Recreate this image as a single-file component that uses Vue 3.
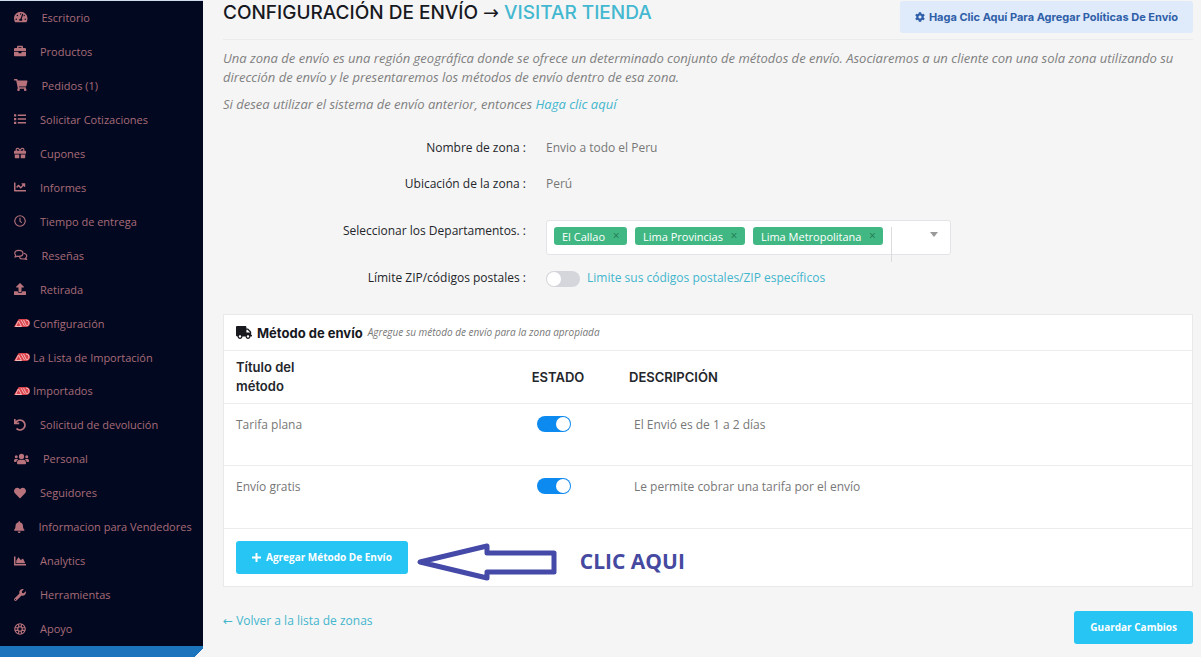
<script setup>
import { ref } from 'vue'

const icons = {
  dash: { w: 576, d: 'M288 32C128.94 32 0 160.94 0 320c0 52.8 14.25 102.26 39.06 144.8 5.61 9.62 16.3 15.2 27.44 15.2h443c11.14 0 21.83-5.58 27.44-15.2C561.75 422.26 576 372.8 576 320c0-159.06-128.94-288-288-288zm0 64c14.71 0 26.58 10.13 30.32 23.65-1.11 2.26-2.64 4.23-3.45 6.67l-9.22 27.67c-5.13 3.49-10.97 6.01-17.64 6.01-17.67 0-32-14.33-32-32S270.33 96 288 96zM96 384c-17.67 0-32-14.33-32-32s14.33-32 32-32 32 14.33 32 32-14.33 32-32 32zm48-160c-17.67 0-32-14.33-32-32s14.33-32 32-32 32 14.33 32 32-14.33 32-32 32zm246.77-72.41l-61.33 184C343.13 347.33 352 364.54 352 384c0 11.72-3.38 22.55-8.88 32H232.88c-5.5-9.45-8.88-20.28-8.88-32 0-33.94 26.5-61.43 59.9-63.59l61.34-184.01c4.17-12.56 17.73-19.45 30.36-15.17 12.57 4.19 19.35 17.79 15.17 30.36zm14.66 57.2l15.52-46.55c3.47-1.29 7.13-2.23 11.05-2.23 17.67 0 32 14.33 32 32s-14.33 32-32 32c-11.38-.01-20.89-6.28-26.57-15.22zM480 384c-17.67 0-32-14.33-32-32s14.33-32 32-32 32 14.33 32 32-14.33 32-32 32z' },
  case: { w: 512, d: 'M320 336c0 8.84-7.16 16-16 16h-96c-8.84 0-16-7.16-16-16v-48H0v144c0 25.6 22.4 48 48 48h416c25.6 0 48-22.4 48-48V288H320v48zm144-208h-80V80c0-25.6-22.4-48-48-48H176c-25.6 0-48 22.4-48 48v48H48c-25.6 0-48 22.4-48 48v80h512v-80c0-25.6-22.4-48-48-48zm-144 0H192V96h128v32z' },
  cart: { w: 576, d: 'M528.12 301.319l47.273-208C578.806 78.301 567.391 64 551.99 64H159.208l-9.166-44.81C147.758 8.021 137.93 0 126.529 0H24C10.745 0 0 10.745 0 24v16c0 13.255 10.745 24 24 24h69.883l70.248 343.435C147.325 417.1 136 435.222 136 456c0 30.928 25.072 56 56 56s56-25.072 56-56c0-15.674-6.447-29.835-16.824-40h209.647C430.447 426.165 424 440.326 424 456c0 30.928 25.072 56 56 56s56-25.072 56-56c0-22.172-12.888-41.332-31.579-50.405l5.517-24.276c3.413-15.018-8.002-29.319-23.403-29.319H218.117l-6.545-32h293.145c11.206 0 20.92-7.754 23.403-18.681z' },
  list: { w: 512, d: 'M0 48h96v96H0zM0 208h96v96H0zM0 368h96v96H0zM160 64h352v64H160zM160 224h352v64H160zM160 384h352v64H160z' },
  gift: { w: 512, d: 'M32 448c0 17.7 14.3 32 32 32h160V320H32v128zm256 32h160c17.7 0 32-14.3 32-32V320H288v160zm192-320h-42.1c6.2-12.1 10.1-25.5 10.1-40 0-48.5-39.5-88-88-88-41.6 0-68.5 21.3-103 68.3-34.5-47-61.4-68.3-103-68.3-48.5 0-88 39.5-88 88 0 14.5 3.8 27.9 10.1 40H32c-17.7 0-32 14.3-32 32v80c0 8.8 7.2 16 16 16h480c8.8 0 16-7.2 16-16v-80c0-17.7-14.3-32-32-32zm-326.1 0c-22.1 0-40-17.9-40-40s17.9-40 40-40c19.9 0 34.6 3.3 86.1 80h-86.1zm206.1 0h-86.1c51.4-76.5 65.7-80 86.1-80 22.1 0 40 17.9 40 40s-17.9 40-40 40z' },
  line: { w: 512, d: 'M496 384H64V80c0-8.84-7.16-16-16-16H16C7.16 64 0 71.16 0 80v336c0 17.67 14.33 32 32 32h464c8.84 0 16-7.16 16-16v-32c0-8.84-7.16-16-16-16zM464 96H345.94c-21.38 0-32.09 25.85-16.97 40.97l32.4 32.4L288 242.75l-73.37-73.37c-12.5-12.5-32.76-12.5-45.25 0l-68.69 68.69c-6.25 6.25-6.25 16.38 0 22.63l22.62 22.62c6.25 6.25 16.38 6.25 22.63 0L192 237.25l73.37 73.37c12.5 12.5 32.76 12.5 45.25 0l96-96 32.4 32.4c15.12 15.12 40.97 4.41 40.97-16.97V112c.01-8.84-7.15-16-15.99-16z' },
  clock: { w: 512, stroke: true, d: 'M256 32a224 224 0 1 0 0 448a224 224 0 1 0 0-448zM256 120v150l76 56' },
  chat: { w: 576, stroke: true, d: 'M208 56C110 56 32 112 32 186c0 38 18 66 44 88l-34 60c48 0 80-16 100-28 22 6 44 8 66 8 98 0 176-56 176-128S306 56 208 56zM420 182c72 14 124 60 124 118 0 34-18 66-44 86l34 62c-46 0-80-14-102-30-90 20-168-8-206-62' },
  upload: { w: 512, d: 'M296 384h-80c-13.3 0-24-10.7-24-24V192h-87.7c-17.8 0-26.7-21.5-14.1-34.1L242.3 5.7c7.5-7.5 19.8-7.5 27.3 0l152.2 152.2c12.6 12.6 3.7 34.1-14.1 34.1H320v168c0 13.3-10.7 24-24 24zm216-8v112c0 13.3-10.7 24-24 24H24c-13.3 0-24-10.7-24-24V376c0-13.3 10.7-24 24-24h136v8c0 30.9 25.1 56 56 56h80c30.9 0 56-25.1 56-56v-8h136c13.3 0 24 10.7 24 24z' },
  undo: { w: 512, d: 'M212.333 224.333H12c-6.627 0-12-5.373-12-12V12C0 5.373 5.373 0 12 0h48c6.627 0 12 5.373 12 12v78.112C117.773 39.279 184.26 7.47 258.175 8.007c136.906.994 246.448 111.623 246.157 248.532C504.041 393.258 393.12 504 256.333 504c-64.089 0-122.496-24.313-166.51-64.215-5.099-4.622-5.334-12.554-.467-17.42l33.967-33.967c4.474-4.474 11.662-4.717 16.401-.525C170.76 415.336 211.58 432 256.333 432c97.268 0 176-78.716 176-176 0-97.267-78.716-176-176-176-58.496 0-110.28 28.476-142.274 72.333h98.274c6.627 0 12 5.373 12 12v48c0 6.627-5.373 12-12 12z' },
  users: { w: 640, d: 'M96 96a64 64 0 1 0 0 128a64 64 0 1 0 0-128zM544 96a64 64 0 1 0 0 128a64 64 0 1 0 0-128zM320 32a112 112 0 1 0 0 224a112 112 0 1 0 0-224zM64 256h64c18 0 34 7 45 19-40 22-68 60-74 109H32c-18 0-32-14-32-32v-32c0-35 29-64 64-64zM576 256h-64c-18 0-34 7-45 19 40 22 68 60 74 109h67c18 0 32-14 32-32v-32c0-35-29-64-64-64zM243 288h154c64 0 115 52 115 115v29c0 26-22 48-48 48H176c-26 0-48-22-48-48v-29c0-63 51-115 115-115z' },
  heart: { w: 512, d: 'M462.3 62.6C407.5 15.9 326 24.3 275.7 76.2L256 96.5l-19.7-20.3C186.1 24.3 104.5 15.9 49.7 62.6c-62.8 53.6-66.1 149.8-9.9 207.9l193.5 199.8c12.5 12.9 32.8 12.9 45.3 0l193.5-199.8c56.3-58.1 53-154.3-9.8-207.9z' },
  bell: { w: 448, d: 'M224 512c35.32 0 63.97-28.65 63.97-64H160.03c0 35.35 28.65 64 63.97 64zm215.39-149.71c-19.32-20.76-55.47-51.99-55.47-154.29 0-77.7-54.48-139.9-127.94-155.16V32c0-17.67-14.32-32-31.98-32s-31.98 14.33-31.98 32v20.84C118.56 68.1 64.08 130.3 64.08 208c0 102.3-36.15 133.53-55.47 154.29-6 6.45-8.66 14.16-8.61 21.71.11 16.4 12.98 32 32.1 32h383.8c19.12 0 32-15.6 32.1-32 .05-7.55-2.61-15.27-8.61-21.71z' },
  area: { w: 512, d: 'M500 384c6.6 0 12 5.4 12 12v40c0 6.6-5.4 12-12 12H12c-6.6 0-12-5.4-12-12V76c0-6.6 5.4-12 12-12h40c6.6 0 12 5.4 12 12v308h436zM372.7 159.5L288 216l-85.3-113.7c-5.1-6.8-15.5-6.3-19.9 1L96 248v104h384l-89.9-187.8c-3.2-6.5-11.4-8.7-17.4-4.7z' },
  wrench: { w: 512, d: 'M507.73 109.1c-2.24-9.03-13.54-12.09-20.12-5.51l-74.36 74.36-67.88-11.31-11.31-67.88 74.36-74.36c6.62-6.62 3.43-17.9-5.66-20.16-47.38-11.74-99.55.91-136.58 37.93-39.64 39.64-50.55 97.1-34.05 147.2L18.74 402.76c-24.99 24.99-24.99 65.51 0 90.5 24.99 24.99 65.51 24.99 90.5 0l213.21-213.21c50.12 16.71 107.47 5.68 147.37-34.22 37.07-37.07 49.7-89.32 37.91-136.73zM64 472c-13.25 0-24-10.75-24-24 0-13.26 10.75-24 24-24s24 10.74 24 24c0 13.25-10.75 24-24 24z' },
  ring: { w: 512, stroke: true, d: 'M256 32a224 224 0 1 0 0 448a224 224 0 1 0 0-448zM256 160a96 96 0 1 0 0 192a96 96 0 1 0 0-192zM200 48v130M312 48v130M200 334v130M312 334v130M48 200h130M48 312h130M334 200h130M334 312h130' },
}

const menu = [
  ['dash', 'Escritorio'],
  ['case', 'Productos'],
  ['cart', 'Pedidos (1)'],
  ['list', 'Solicitar Cotizaciones'],
  ['gift', 'Cupones'],
  ['line', 'Informes'],
  ['clock', 'Tiempo de entrega'],
  ['chat', 'Reseñas'],
  ['upload', 'Retirada'],
  ['ali', 'Configuración'],
  ['ali', 'La Lista de Importación'],
  ['ali', 'Importados'],
  ['undo', 'Solicitud de devolución'],
  ['users', 'Personal'],
  ['heart', 'Seguidores'],
  ['bell', 'Informacion para Vendedores'],
  ['area', 'Analytics'],
  ['wrench', 'Herramientas'],
  ['ring', 'Apoyo'],
]

const departments = ref(['El Callao', 'Lima Provincias', 'Lima Metropolitana'])
const limitZip = ref(false)
const methods = ref([
  { title: 'Tarifa plana', on: true, text: 'El Envió es de 1 a 2 días' },
  { title: 'Envío gratis', on: true, text: 'Le permite cobrar una tarifa por el envío' },
])

function removeDepartment(name) {
  departments.value = departments.value.filter((d) => d !== name)
}
</script>

<template>
  <div class="page">
    <aside class="sidebar">
      <nav class="menu">
        <a v-for="[icon, label] in menu" :key="label" href="#" class="item" :class="{ tight: icon === 'ali' }">
          <svg v-if="icon === 'ali'" width="16" height="8" viewBox="0 0 32 16" aria-hidden="true">
            <path d="M0 16L8 2q1-2 3-2h14q7 1 7 8t-7 8z" fill="#d8434c" />
            <path d="M3 15l6-11 6 11zM14 2l7 12M19 2l6 12M24 2q6 0 6 6 0 4-4 6" fill="none" stroke="#f6b9bb" stroke-width="2" />
          </svg>
          <svg v-else height="12" :viewBox="`0 0 ${icons[icon].w} 512`" :class="{ outline: icons[icon].stroke }" aria-hidden="true">
            <path :d="icons[icon].d" />
          </svg>
          <span>{{ label }}</span>
        </a>
      </nav>
      <div class="side-foot"></div>
    </aside>

    <main class="main">
      <header class="head">
        <h1>CONFIGURACIÓN DE ENVÍO <span class="arrow">→</span> <a href="#">VISITAR TIENDA</a></h1>
        <button type="button" class="policy">
          <svg width="10" height="10" viewBox="0 0 512 512" aria-hidden="true">
            <path d="M487.4 315.7l-42.6-24.6c4.3-23.2 4.3-47 0-70.2l42.6-24.6c4.9-2.8 7.1-8.6 5.5-14-11.1-35.6-30-67.8-54.7-94.6-3.8-4.1-10-5.1-14.8-2.3L380.8 110c-17.9-15.4-38.5-27.3-60.8-35.1V25.8c0-5.6-3.9-10.5-9.4-11.7-36.7-8.2-74.3-7.8-109.2 0-5.5 1.2-9.4 6.1-9.4 11.7V75c-22.2 7.9-42.8 19.8-60.8 35.1L88.7 85.5c-4.9-2.8-11-1.9-14.8 2.3-24.7 26.7-43.6 58.9-54.7 94.6-1.7 5.4.6 11.2 5.5 14L67.3 221c-4.3 23.2-4.3 47 0 70.2l-42.6 24.6c-4.9 2.8-7.1 8.6-5.5 14 11.1 35.6 30 67.8 54.7 94.6 3.8 4.1 10 5.1 14.8 2.3l42.6-24.6c17.9 15.4 38.5 27.3 60.8 35.1v49.2c0 5.6 3.9 10.5 9.4 11.7 36.7 8.2 74.3 7.8 109.2 0 5.5-1.2 9.4-6.1 9.4-11.7v-49.2c22.2-7.9 42.8-19.8 60.8-35.1l42.6 24.6c4.9 2.8 11 1.9 14.8-2.3 24.7-26.7 43.6-58.9 54.7-94.6 1.5-5.5-.7-11.3-5.6-14.1zM256 336c-44.1 0-80-35.9-80-80s35.9-80 80-80 80 35.9 80 80-35.9 80-80 80z" />
          </svg>
          Haga Clic Aquí Para Agregar Políticas De Envío
        </button>
      </header>

      <div class="intro">
        <p>Una zona de envío es una región geográfica donde se ofrece un determinado conjunto de métodos de envío. Asociaremos a un cliente con una sola zona utilizando su dirección de envío y le presentaremos los métodos de envío dentro de esa zona.</p>
        <p>Si desea utilizar el sistema de envío anterior, entonces <a href="#">Haga clic aquí</a></p>
      </div>

      <form class="form" @submit.prevent>
        <span class="label">Nombre de zona :</span>
        <span class="value">Envio a todo el Peru</span>
        <span class="label">Ubicación de la zona :</span>
        <span class="value">Perú</span>
        <label class="label dep-label" for="departments">Seleccionar los Departamentos. :</label>
        <div class="select">
          <span v-for="d in departments" :key="d" class="chip">{{ d }}<button type="button" :aria-label="`Quitar ${d}`" @click="removeDepartment(d)">×</button></span>
          <input id="departments" type="text" class="search" />
          <span class="caret"></span>
        </div>
        <label class="label" for="limit">Límite ZIP/códigos postales :</label>
        <div class="limit">
          <input id="limit" v-model="limitZip" type="checkbox" class="toggle" />
          <a href="#">Limite sus códigos postales/ZIP específicos</a>
        </div>
      </form>

      <section class="card">
        <div class="card-head">
          <svg width="16" height="13" viewBox="0 0 640 512" aria-hidden="true">
            <path d="M624 352h-16V243.9c0-12.7-5.1-24.9-14.1-33.9L494 110.1c-9-9-21.2-14.1-33.9-14.1H416V48c0-26.5-21.5-48-48-48H48C21.5 0 0 21.5 0 48v320c0 26.5 21.5 48 48 48h16c0 53 43 96 96 96s96-43 96-96h128c0 53 43 96 96 96s96-43 96-96h48c8.8 0 16-7.2 16-16v-32c0-8.8-7.2-16-16-16zM160 464c-26.5 0-48-21.5-48-48s21.5-48 48-48 48 21.5 48 48-21.5 48-48 48zm320 0c-26.5 0-48-21.5-48-48s21.5-48 48-48 48 21.5 48 48-21.5 48-48 48zm80-208H416V144h44.1l99.9 99.9V256z" />
          </svg>
          <h2>Método de envío</h2>
          <em>Agregue su método de envío para la zona apropiada</em>
        </div>
        <table>
          <thead>
            <tr>
              <th class="col-title">Título del<br />método</th>
              <th class="col-state">ESTADO</th>
              <th>DESCRIPCIÓN</th>
            </tr>
          </thead>
          <tbody>
            <tr v-for="m in methods" :key="m.title">
              <td>{{ m.title }}</td>
              <td class="col-state"><input v-model="m.on" type="checkbox" class="toggle" :aria-label="m.title" /></td>
              <td class="desc">{{ m.text }}</td>
            </tr>
          </tbody>
        </table>
        <div class="card-foot">
          <button type="button" class="btn">
            <svg width="9" height="9" viewBox="0 0 18 18" aria-hidden="true"><path d="M9 0v18M0 9h18" stroke="#fff" stroke-width="4" /></svg>
            Agregar Método De Envío
          </button>
          <svg class="pointer" width="140" height="38" viewBox="0 0 140 38" aria-hidden="true">
            <path d="M3 19L70 3V10H137V29H70V35Z" fill="none" stroke="#4549a8" stroke-width="5" stroke-linejoin="round" />
          </svg>
          <strong>CLIC AQUI</strong>
        </div>
      </section>

      <footer class="foot">
        <a href="#"><span class="arrow">←</span> Volver a la lista de zonas</a>
        <button type="button" class="btn">Guardar Cambios</button>
      </footer>
    </main>
  </div>
</template>

<style>
body {
  background: #f5f5f5;
}
</style>

<style scoped>
.page {
  display: flex;
  min-height: 100vh;
  background: #f5f5f5;
  color: #777;
  font: 12px/19px "Open Sans", "Noto Sans", sans-serif;
}
.page * {
  box-sizing: border-box;
}
a {
  color: #43b6cd;
  text-decoration: none;
}
button {
  border: 0;
  cursor: pointer;
}
.arrow {
  font-family: "DejaVu Sans", sans-serif;
  font-weight: 400;
  line-height: 1;
}
.sidebar {
  flex: 0 0 203px;
  min-width: 0;
  display: flex;
  flex-direction: column;
  background: #020820;
  border-top: 1px solid #cfdcec;
}
.menu {
  flex: 1;
  display: flex;
  flex-direction: column;
}
.item {
  flex: 1 0 33px;
  display: flex;
  align-items: center;
  gap: 14px;
  padding: 0 0 1px 14px;
  color: #a86c78;
  font-size: 11px;
  white-space: nowrap;
}
.item svg {
  flex: none;
  fill: #b8727c;
}
.item svg.outline {
  fill: none;
  stroke: #b8727c;
  stroke-width: 48;
}
.item.tight {
  gap: 3px;
}
.side-foot {
  height: 11px;
  background: linear-gradient(135deg, #1c75bc calc(100% - 6px), #f5f5f5 0);
}
.main {
  flex: 1;
  min-width: 0;
  padding: 0 8px 0 20px;
}
.head {
  display: flex;
  align-items: flex-start;
  justify-content: space-between;
  height: 40px;
  border-bottom: 1px solid #e9ebec;
}
h1 {
  margin: 0;
  color: #17191f;
  font: 500 19px/26px Inter, sans-serif;
}
h1 a {
  color: #43b8d0;
}
.policy {
  display: flex;
  align-items: center;
  gap: 4px;
  height: 32px;
  margin-top: 1px;
  padding: 0 15px;
  border-radius: 3px;
  background: #dfeafa;
  color: #2f5fa8;
  fill: #2f5fa8;
  font: 700 11px/16px Inter, sans-serif;
}
.intro {
  padding-top: 9px;
  color: #808080;
  font-size: 13px;
  font-style: italic;
}
.intro p {
  margin: 0 0 8px;
}
.form {
  display: grid;
  grid-template-columns: 303px 1fr;
  column-gap: 20px;
  padding-top: 16px;
}
.label {
  height: 36px;
  color: #23262b;
  text-align: right;
}
.value {
  height: 36px;
}
.dep-label {
  height: 58px;
  padding-top: 11px;
}
.select {
  display: flex;
  align-items: flex-start;
  gap: 8px;
  width: 405px;
  height: 35px;
  margin-top: 10px;
  padding: 6px 12px 0 7px;
  border: 1px solid #e3e4e9;
  border-radius: 3px;
  background: #fff;
}
.chip {
  display: flex;
  align-items: center;
  height: 18px;
  padding-left: 8px;
  border-radius: 3px;
  background: #41b883;
  color: #fff;
  font-size: 11px;
  white-space: nowrap;
}
.chip button {
  width: 22px;
  padding: 0;
  background: none;
  color: #217a52;
  font: 12px/18px "Open Sans", sans-serif;
}
.search {
  flex: 1;
  min-width: 0;
  height: 35px;
  border: 0;
  border-left: 1px solid #dcdcdf;
  outline: 0;
  background: none;
}
.caret {
  margin-top: 5px;
  border: 4px solid transparent;
  border-top: 5px solid #999;
}
.limit {
  display: flex;
  gap: 7px;
}
.toggle {
  flex: none;
  display: block;
  width: 34px;
  height: 16px;
  margin: 0;
  padding: 1px;
  border-radius: 8px;
  background: #d5d6dc;
  appearance: none;
}
.toggle::before {
  content: "";
  display: block;
  width: 14px;
  height: 14px;
  border-radius: 50%;
  background: #fff;
}
.toggle:checked {
  background: #0d8af0;
}
.toggle:checked::before {
  margin-left: 18px;
}
.limit .toggle {
  margin-top: 3px;
}
.card {
  margin-top: 10px;
  border: 1px solid #e9e9eb;
  background: #fff;
}
.card-head {
  display: flex;
  align-items: center;
  gap: 5px;
  height: 35px;
  padding-left: 12px;
  fill: #17191f;
}
h2 {
  margin: 0;
  color: #17191f;
  font: 700 13px/20px Inter, sans-serif;
}
.card-head em {
  font-size: 10px;
}
table {
  width: 100%;
  border-collapse: collapse;
}
tr {
  border-top: 1px solid #ececef;
}
th {
  height: 53px;
  padding: 0 0 0 12px;
  color: #23262b;
  font: 600 13px/19px Inter, sans-serif;
  text-align: left;
}
td {
  height: 62px;
  padding: 11px 0 0 12px;
  vertical-align: top;
}
.col-title {
  width: 284px;
}
.col-state {
  width: 100px;
  padding-left: 0;
  text-align: center;
}
td.col-state {
  padding: 12px 8px 0 0;
}
.col-state .toggle {
  margin: 0 auto;
}
th:last-child {
  padding-left: 21px;
}
.desc {
  padding-left: 26px;
}
.card-foot {
  display: flex;
  align-items: center;
  height: 58px;
  padding-left: 12px;
  border-top: 1px solid #ececef;
}
.btn {
  display: flex;
  align-items: center;
  gap: 5px;
  height: 33px;
  padding: 0 16px;
  border-radius: 3px;
  background: #27c5f3;
  color: #fff;
  font: 700 10px/16px "Open Sans", sans-serif;
  white-space: nowrap;
}
.pointer {
  flex: none;
  margin: 9px 23px 0 9px;
}
.card-foot strong {
  margin-top: 9px;
  color: #4549a0;
  font: 700 21px/27px "Open Sans", sans-serif;
}
.foot {
  display: flex;
  justify-content: space-between;
  padding-top: 24px;
}
</style>
